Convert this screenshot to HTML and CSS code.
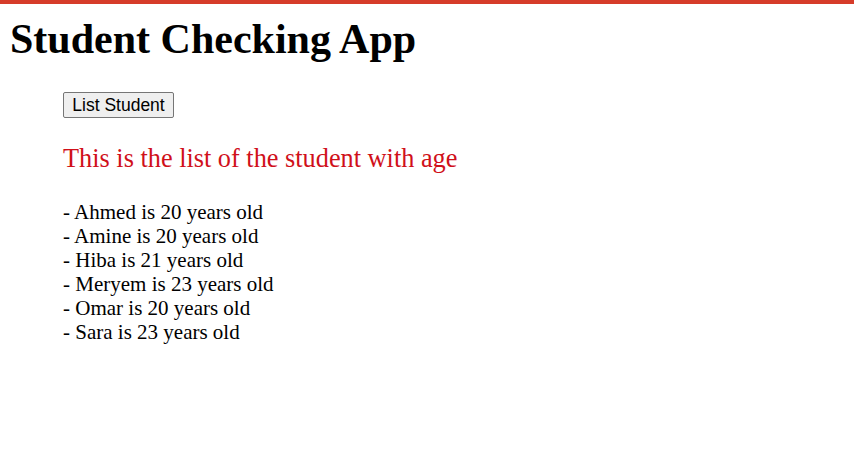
FILE: index.html
```html
<!DOCTYPE html>
<html>
<head>
<meta charset="utf-8">
<link rel="stylesheet" href="styles.css">
</head>
<body>
<div class="topbar"></div>
<h1 class="title">Student Checking App</h1>
<div class="content">
  <button class="btn">List Student</button>
  <p class="heading">This is the list of the student with age</p>
  <div class="list">
    <div>- Ahmed is 20 years old</div>
    <div>- Amine is 20 years old</div>
    <div>- Hiba is 21 years old</div>
    <div>- Meryem is 23 years old</div>
    <div>- Omar is 20 years old</div>
    <div>- Sara is 23 years old</div>
  </div>
</div>
</body>
</html>
```
FILE: styles.css
```css
html, body { margin: 0; padding: 0; background: #fff; }
body { font-family: "Liberation Serif", "Times New Roman", serif; color: #000; }
.topbar { height: 4px; background: #d63c2a; }
.title {
  margin: 12px 0 0 10px;
  font-size: 42px;
  line-height: 46px;
  font-weight: bold;
}
.content { padding-left: 63px; }
.btn {
  margin-top: 30px;
  display: block;
  width: 111px;
  height: 26px;
  padding: 0;
  font-family: "Liberation Sans", Arial, sans-serif;
  font-size: 17.5px;
  color: #000;
  background: #efefef;
  border: 1px solid #767676;
  border-radius: 2px;
}
.heading {
  margin: 26px 0 0 0;
  font-size: 26.3px;
  line-height: 30px;
  color: #d0101a;
}
.list {
  margin-top: 26px;
  font-size: 21px;
  line-height: 24px;
}
```
